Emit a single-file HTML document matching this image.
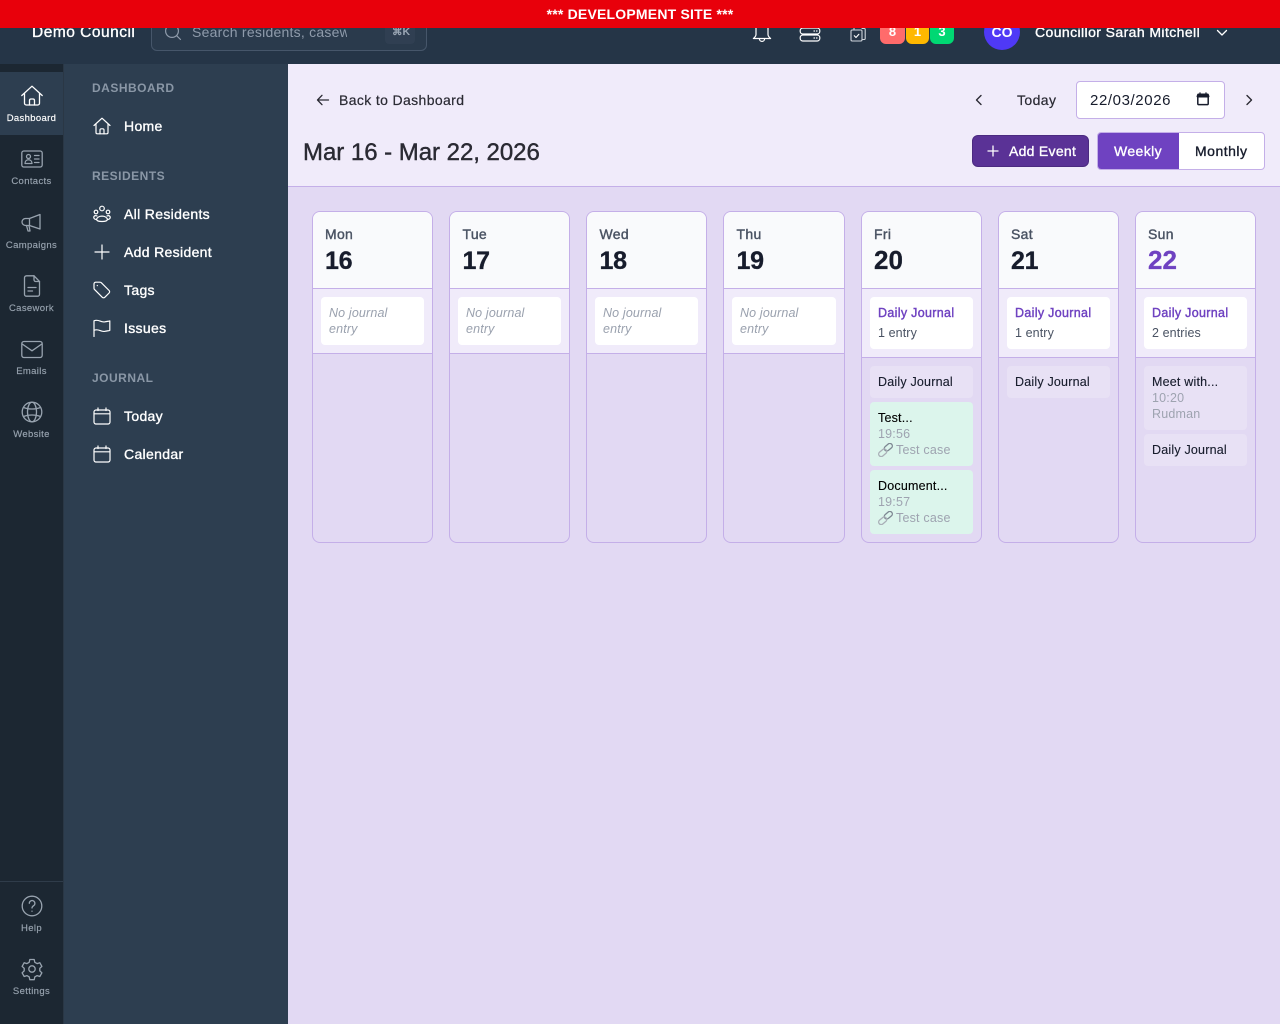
<!DOCTYPE html>
<html lang="en"><head><meta charset="utf-8"><title>Calendar</title>
<style>
*{box-sizing:border-box}
html,body{margin:0;padding:0;width:1280px;height:1024px;overflow:hidden;background:#e2d9f3;font-family:"Liberation Sans",sans-serif}
.a{position:absolute}
.t{position:absolute;white-space:nowrap;line-height:20px;height:20px}
.m{-webkit-text-stroke:.35px currentColor}
svg{position:absolute;fill:none;stroke-linecap:round;stroke-linejoin:round}
.rail{left:0;top:64px;width:64px;height:960px;background:#1c2732;border-right:1px solid #2a3745}
.rl{width:63px;left:0;text-align:center;font-size:9.5px;letter-spacing:.35px;color:#98a3af;line-height:12px;height:12px;-webkit-text-stroke:.15px currentColor}
.rs{stroke:#98a3af;stroke-width:1.3}
.nav{left:64px;top:64px;width:224px;height:960px;background:#2d3e50}
.h{left:92px;font-size:12px;font-weight:bold;letter-spacing:.5px;color:#8a97a6}
.n{left:124px;font-size:14px;color:#fff;letter-spacing:.33px}
.ns{stroke:#fff;stroke-width:1.2}
.col{position:absolute;top:211px;height:332px;border:1px solid #c4afe8;border-radius:8px;overflow:hidden;background:#e2d9f3}
.hd{position:absolute;left:0;right:0;top:0;height:77px;background:#f9fafc;border-bottom:1px solid #c4afe8}
.dn{position:absolute;left:12px;top:13px;font-size:14px;line-height:18px;color:#4a5363;letter-spacing:.3px;-webkit-text-stroke:.4px #4a5363}
.dd{position:absolute;left:12px;top:32px;font-size:26px;line-height:32px;font-weight:bold;color:#171c2c;-webkit-text-stroke:.3px currentColor}
.tn{top:33px;font-size:25px;letter-spacing:-.3px}
.ln{left:12.5px}
.js{position:absolute;left:0;right:0;top:77px;background:#f0ebfa;border-bottom:1px solid #c4afe8}
.jc{position:absolute;left:8px;right:8px;top:8px;background:#fff;border-radius:4px;padding:8px}
.ne{font-size:12.5px;line-height:16px;font-style:italic;color:#9aa1ae;letter-spacing:.15px}
.jt{font-size:12.5px;line-height:16px;color:#6f42c1;letter-spacing:.32px;-webkit-text-stroke:.4px #6f42c1;white-space:nowrap}
.je{font-size:12.5px;line-height:16px;margin-top:4px;color:#4a5363;letter-spacing:.1px;white-space:nowrap}
.ev{position:absolute;left:8px;right:8px;border-radius:4px;background:#e8e1f5;padding:8px;font-size:12.5px;line-height:16px;color:#171c2c;letter-spacing:.2px;white-space:nowrap;-webkit-text-stroke:.12px currentColor}
.g{background:#dcf5ec}
.gy{color:#9ea3b0;-webkit-text-stroke:0}
.ev .lk{position:relative;display:inline-block;width:15px;height:14px;vertical-align:-3px;margin-right:3px}
</style></head><body>

<!-- Top bar -->
<div class="a" style="left:0;top:0;width:1280px;height:64px;background:#253547"></div>
<div class="t m" style="left:32px;top:23px;font-size:15.5px;color:#fff;letter-spacing:.5px">Demo Council</div>
<div class="a" style="left:151px;top:10px;width:276px;height:41px;border:1px solid #46566a;border-radius:6px;background:#2a3a4c"></div>
<svg style="left:164px;top:23px" width="18" height="18" viewBox="0 0 18 18" stroke="#8f9bab" stroke-width="1.2"><circle cx="8" cy="8" r="6.4"/><path d="M12.8 12.800 16.500 16.500"/></svg>
<div class="t" style="left:192px;top:22px;width:155px;overflow:hidden;font-size:14px;color:#8f9bab;letter-spacing:.24px">Search residents, casew</div>
<div class="a" style="left:385px;top:20px;width:30px;height:24px;border-radius:4px;background:#303f52"></div>
<div class="t" style="left:392px;top:22px;font-size:10.5px;font-weight:bold;color:#9aa6b4">⌘K</div>

<svg style="left:751px;top:20px" width="22" height="24" viewBox="0 0 22 24" stroke="#fff" stroke-width="1.2"><path d="M5 8v6.500c0 1.700-1 2.700-2.600 4h17.200c-1.600-1.300-2.600-2.300-2.600-4V8A6 6 0 0 0 5 8Z"/><path d="M8.400 18.700c0 3.600 5.200 3.600 5.200 0"/></svg>
<svg style="left:799px;top:26px" width="22" height="18" viewBox="0 0 22 18" stroke="#fff" stroke-width="1.2"><rect x="1.200" y="2" width="19.600" height="6" rx="2.600"/><rect x="1.200" y="9" width="19.600" height="6" rx="2.600"/><path d="M15 5h.5M17.500 5h.5M15 12h.5M17.500 12h.5"/></svg>
<svg style="left:848px;top:24px" width="20" height="20" viewBox="0 0 20 20" stroke="#cfd5dc" stroke-width="1.1"><rect x="3" y="6" width="11" height="11" rx="1.200"/><path d="M14 4.500h2.200a1 1 0 0 1 1 1v9a1 1 0 0 1-1 1H14M6 6V4a1 1 0 0 1 1-1h6"/><path d="M6.300 11.700 8 13.500l2.900-3.200" stroke="#fff"/></svg>
<div class="a" style="left:880px;top:20px;width:25px;height:24px;background:#ff6b6b;border-radius:0 0 6px 6px;color:#fff;font-size:13px;font-weight:bold;text-align:center;line-height:24px">8</div>
<div class="a" style="left:906px;top:20px;width:23px;height:24px;background:#ffb800;border-radius:0 0 6px 6px;color:#fff;font-size:13px;font-weight:bold;text-align:center;line-height:24px">1</div>
<div class="a" style="left:930px;top:20px;width:24px;height:24px;background:#00d873;border-radius:0 0 6px 6px;color:#fff;font-size:13px;font-weight:bold;text-align:center;line-height:24px">3</div>
<div class="a" style="left:984px;top:14px;width:36px;height:36px;border-radius:50%;background:#4f39f6;color:#fff;font-size:14px;font-weight:bold;text-align:center;line-height:36px">CO</div>
<div class="t m" style="left:1035px;top:22px;font-size:14px;color:#fff;letter-spacing:.41px">Councillor Sarah Mitchell</div>
<svg style="left:1215px;top:26px" width="14" height="14" viewBox="0 0 14 14" stroke="#fff" stroke-width="1.3"><path d="M2.500 4.500 7 9l4.500-4.500"/></svg>

<!-- Red banner -->
<div class="a" style="left:0;top:0;width:1280px;height:28px;background:#e8000b;color:#fff;font-size:14px;font-weight:bold;text-align:center;line-height:28px;letter-spacing:.2px">*** DEVELOPMENT SITE ***</div>

<!-- Rail -->
<div class="a rail"></div>
<div class="a" style="left:0;top:72px;width:63px;height:63px;background:#2d3e50"></div>
<div class="a" style="left:0;top:881px;width:63px;height:1px;background:#2f3c4a"></div>

<svg style="left:20px;top:84px" width="24" height="24" viewBox="0 0 24 24" stroke="#fff" stroke-width="1.3"><path d="M1.800 11.500 12 2.200l10.200 9.300M4.500 9.500v9.700c0 1 .8 1.800 1.800 1.800h11.400c1 0 1.800-.8 1.800-1.800V9.500"/><path d="M9.500 21v-4.500c0-.8.600-1.500 1.500-1.500h2c.9 0 1.500.7 1.500 1.500V21"/></svg>
<div class="a rl" style="top:113px;color:#fff">Dashboard</div>

<svg class="rs" style="left:20px;top:147px" width="24" height="24" viewBox="0 0 24 24"><rect x="1.800" y="4" width="20.400" height="16" rx="2"/><circle cx="8.500" cy="9.500" r="2"/><path d="M5 16.500c0-5 7-5 7 0ZM14.500 8.500h4.500M14.500 12h4.500M14.500 15.500h4.500"/></svg>
<div class="a rl" style="top:176px">Contacts</div>

<svg class="rs" style="left:20px;top:211px" width="24" height="24" viewBox="0 0 24 24"><path d="M20 3.500 9.500 7.500H5.500a3.500 3.500 0 0 0-3.500 3.500v0a3.500 3.500 0 0 0 3.500 3.500h4L20 18Z"/><path d="M9.500 7.500v7M6.500 14.500l1.500 5.500h2l-1-5.500"/></svg>
<div class="a rl" style="top:240px">Campaigns</div>

<svg class="rs" style="left:20px;top:274px" width="24" height="24" viewBox="0 0 24 24"><path d="M14 1.800H6.500A2 2 0 0 0 4.500 3.800v16.400a2 2 0 0 0 2 2h11a2 2 0 0 0 2-2V7.500Z"/><path d="M14 1.800v4a1.700 1.700 0 0 0 1.700 1.700h3.800M8 13.500h8M8 17h4.500"/></svg>
<div class="a rl" style="top:303px">Casework</div>

<svg class="rs" style="left:20px;top:338px" width="24" height="24" viewBox="0 0 24 24"><rect x="1.800" y="3.500" width="20.400" height="16" rx="2.200"/><path d="M2.200 6 12 12.800 21.800 6"/></svg>
<div class="a rl" style="top:366px">Emails</div>

<svg class="rs" style="left:20px;top:400px" width="24" height="24" viewBox="0 0 24 24"><circle cx="12" cy="12" r="9.800"/><ellipse cx="12" cy="12" rx="4.500" ry="9.800"/><path d="M3.500 7.500c5 2 12 2 17 0M3.500 16.500c5-2 12-2 17 0"/></svg>
<div class="a rl" style="top:429px">Website</div>

<svg class="rs" style="left:20px;top:894px" width="24" height="24" viewBox="0 0 24 24"><circle cx="12" cy="12" r="9.800"/><path d="M9.300 9.300a2.800 2.800 0 1 1 4.300 2.400c-1 .7-1.600 1.200-1.600 2.300M12 17.200v.1"/></svg>
<div class="a rl" style="top:923px">Help</div>

<svg class="rs" style="left:20px;top:957px" width="24" height="24" viewBox="0 0 24 24"><circle cx="12" cy="12" r="3.200"/><path d="M9.800 2.500h4.400l.6 2.800 2.300 1.300 2.700-.9 2.100 3.700-2.100 1.900v2.600l2.100 1.900-2.100 3.700-2.700-.9-2.300 1.300-.6 2.800H9.800l-.6-2.800-2.300-1.300-2.700.9-2.100-3.700 2.100-1.900v-2.600L2.100 9.400l2.100-3.700 2.700.9 2.300-1.300Z"/></svg>
<div class="a rl" style="top:986px">Settings</div>

<!-- Secondary nav -->
<div class="a nav"></div>
<div class="t h" style="top:78px">DASHBOARD</div>
<svg class="ns" style="left:93px;top:117px" width="18" height="18" viewBox="0 0 18 18"><path d="M1 8.500 9 1.200l8 7.300M3 7.200v8.300c0 .7.500 1.300 1.300 1.300h9.400c.8 0 1.300-.6 1.300-1.300V7.200"/><path d="M7 16.800V13c0-.7.500-1.200 1.200-1.200h1.600c.7 0 1.200.5 1.200 1.200v3.800"/></svg>
<div class="t n m" style="top:116px">Home</div>

<div class="t h" style="top:166px">RESIDENTS</div>
<svg class="ns" style="left:93px;top:205px" width="18" height="18" viewBox="0 0 18 18" stroke-width="1.050"><circle cx="9" cy="3.500" r="2.300"/><circle cx="3" cy="7" r="1.800"/><circle cx="15" cy="7" r="1.800"/><path d="M3 14.500c-2.200-.2-2.500-2-2-3 .5-.8 1.800-1 3-.6M15 14.500c2.200-.2 2.500-2 2-3-.5-.8-1.800-1-3-.6"/><path d="M3.500 14.500c1-4.500 10-4.500 11 0-1 2.700-10 2.700-11 0Z"/></svg>
<div class="t n m" style="top:204px">All Residents</div>
<svg class="ns" style="left:93px;top:243px" width="18" height="18" viewBox="0 0 18 18"><path d="M9 2v14M2 9h14"/></svg>
<div class="t n m" style="top:242px">Add Resident</div>
<svg class="ns" style="left:93px;top:281px" width="18" height="18" viewBox="0 0 18 18"><path d="M1 3v4.200c0 .5.200 1 .6 1.400l7.700 7.700c.7.700 1.800.7 2.500 0l4.300-4.300c.7-.7.700-1.800 0-2.500L8.400 1.800A2 2 0 0 0 7 1.200H2.800A1.800 1.800 0 0 0 1 3Z"/><path d="M4.300 4.500v.1"/></svg>
<div class="t n m" style="top:280px">Tags</div>
<svg class="ns" style="left:93px;top:319px" width="18" height="18" viewBox="0 0 18 18"><path d="M1 17.500V1.800c5-2 6.500 2 11 1 2-.4 3.500-.6 4.800-.9v9.500c-1.300.3-2.800.5-4.800.9-4.500 1-6-3-11-1"/></svg>
<div class="t n m" style="top:318px">Issues</div>

<div class="t h" style="top:368px">JOURNAL</div>
<svg class="ns" style="left:93px;top:407px" width="18" height="18" viewBox="0 0 18 18"><rect x="1" y="3" width="16" height="14" rx="2"/><path d="M1 6.800h16M5 1v2.500M13 1v2.500"/></svg>
<div class="t n m" style="top:406px">Today</div>
<svg class="ns" style="left:93px;top:445px" width="18" height="18" viewBox="0 0 18 18"><rect x="1" y="3" width="16" height="14" rx="2"/><path d="M1 6.800h16M5 1v2.500M13 1v2.500"/></svg>
<div class="t n m" style="top:444px">Calendar</div>

<!-- Main header -->
<div class="a" style="left:288px;top:64px;width:992px;height:123px;background:#f0ebfa;border-bottom:1px solid #c4afe8"></div>
<svg style="left:315px;top:92px" width="16" height="16" viewBox="0 0 16 16" stroke="#2a2a33" stroke-width="1.3"><path d="M13.500 8h-11M7 3.300 2.500 8 7 12.700"/></svg>
<div class="t" style="left:339px;top:90px;font-size:14px;color:#2a2a33;letter-spacing:.37px;-webkit-text-stroke:.2px #2a2a33">Back to Dashboard</div>
<div class="t" style="left:303px;top:138px;height:30px;line-height:30px;font-size:24px;color:#2a2a33;letter-spacing:-.03px;-webkit-text-stroke:.4px #2a2a33">Mar 16 - Mar 22, 2026</div>

<svg style="left:971px;top:92px" width="16" height="16" viewBox="0 0 16 16" stroke="#2a2a33" stroke-width="1.4"><path d="M10 3.500 5.500 8l4.500 4.500"/></svg>
<div class="t" style="left:1017px;top:90px;font-size:14px;color:#2a2a33;letter-spacing:.4px;-webkit-text-stroke:.2px #2a2a33">Today</div>
<div class="a" style="left:1076px;top:81px;width:149px;height:38px;background:#fff;border:1px solid #c4afe8;border-radius:4px"></div>
<div class="t" style="left:1090px;top:91px;font-size:15px;color:#171c2c;letter-spacing:.6px">22/03/2026</div>
<svg style="left:1195px;top:91px" width="17" height="17" viewBox="0 0 17 17" stroke="#171c2c" stroke-width="1.5"><rect x="2.800" y="3.200" width="10.400" height="10.400" rx=".8"/><path d="M2.800 5.300h10.400" stroke-width="2.500"/><path d="M5 1.800v1.500M11 1.800v1.500" stroke-width="1.200"/></svg>
<svg style="left:1241px;top:92px" width="16" height="16" viewBox="0 0 16 16" stroke="#2a2a33" stroke-width="1.4"><path d="M6 3.500 10.500 8 6 12.500"/></svg>

<div class="a" style="left:972px;top:135px;width:117px;height:32px;background:#5a3296;border:1px solid #4b2a80;border-radius:6px"></div>
<svg style="left:986px;top:144px" width="14" height="14" viewBox="0 0 14 14" stroke="#fff" stroke-width="1.3"><path d="M7 2v10M2 7h10"/></svg>
<div class="t m" style="left:1009px;top:141px;font-size:14px;color:#fff;letter-spacing:.28px">Add Event</div>
<div class="a" style="left:1097px;top:132px;width:168px;height:38px;background:#fff;border:1px solid #c4afe8;border-radius:4px"></div>
<div class="a" style="left:1098px;top:133px;width:81px;height:36px;background:#6f42c1;border-radius:3px 0 0 3px"></div>
<div class="t m" style="left:1114px;top:141px;font-size:14px;color:#fff;letter-spacing:.4px">Weekly</div>
<div class="t m" style="left:1195px;top:141px;font-size:14px;color:#171c2c;letter-spacing:.5px">Monthly</div>

<!-- Columns -->
<div class="col" style="left:312px;width:121px"><div class="hd"><div class="dn">Mon</div><div class="dd tn">16</div></div><div class="js" style="height:65px"><div class="jc" style="height:48px"><div class="ne">No journal<br>entry</div></div></div></div>
<div class="col" style="left:449px;width:121px"><div class="hd"><div class="dn ln">Tue</div><div class="dd tn ln">17</div></div><div class="js" style="height:65px"><div class="jc" style="height:48px"><div class="ne">No journal<br>entry</div></div></div></div>
<div class="col" style="left:586px;width:121px"><div class="hd"><div class="dn ln">Wed</div><div class="dd tn ln">18</div></div><div class="js" style="height:65px"><div class="jc" style="height:48px"><div class="ne">No journal<br>entry</div></div></div></div>
<div class="col" style="left:723px;width:122px"><div class="hd"><div class="dn ln">Thu</div><div class="dd tn ln">19</div></div><div class="js" style="height:65px"><div class="jc" style="height:48px"><div class="ne">No journal<br>entry</div></div></div></div>

<div class="col" style="left:861px;width:121px"><div class="hd"><div class="dn">Fri</div><div class="dd">20</div></div>
<div class="js" style="height:69px"><div class="jc" style="height:52px"><div class="jt">Daily Journal</div><div class="je">1 entry</div></div></div>
<div class="ev" style="top:154px;height:32px">Daily Journal</div>
<div class="ev g" style="top:190px;height:64px"><span style="color:#000">Test...</span><br><span class="gy">19:56</span><br><span class="lk"><svg style="left:0;top:0" width="15" height="14" viewBox="0 0 15 14" stroke-width="1.300"><rect x="5.800" y="1.700" width="9" height="5" rx="2.500" transform="rotate(-40 10.300 4.200)" stroke="#7d8792"/><rect x=".2" y="7.300" width="9" height="5" rx="2.500" transform="rotate(-40 4.700 9.800)" stroke="#a9afb7"/></svg></span><span class="gy">Test case</span></div>
<div class="ev g" style="top:258px;height:64px"><span style="color:#000">Document...</span><br><span class="gy">19:57</span><br><span class="lk"><svg style="left:0;top:0" width="15" height="14" viewBox="0 0 15 14" stroke-width="1.300"><rect x="5.800" y="1.700" width="9" height="5" rx="2.500" transform="rotate(-40 10.300 4.200)" stroke="#7d8792"/><rect x=".2" y="7.300" width="9" height="5" rx="2.500" transform="rotate(-40 4.700 9.800)" stroke="#a9afb7"/></svg></span><span class="gy">Test case</span></div>
</div>

<div class="col" style="left:998px;width:121px"><div class="hd"><div class="dn">Sat</div><div class="dd tn">21</div></div>
<div class="js" style="height:69px"><div class="jc" style="height:52px"><div class="jt">Daily Journal</div><div class="je">1 entry</div></div></div>
<div class="ev" style="top:154px;height:32px">Daily Journal</div>
</div>

<div class="col" style="left:1135px;width:121px"><div class="hd"><div class="dn">Sun</div><div class="dd" style="color:#6f42c1">22</div></div>
<div class="js" style="height:69px"><div class="jc" style="height:52px"><div class="jt">Daily Journal</div><div class="je">2 entries</div></div></div>
<div class="ev" style="top:154px;height:64px">Meet with...<br><span class="gy">10:20</span><br><span class="gy">Rudman</span></div>
<div class="ev" style="top:222px;height:32px">Daily Journal</div>
</div>

</body></html>
